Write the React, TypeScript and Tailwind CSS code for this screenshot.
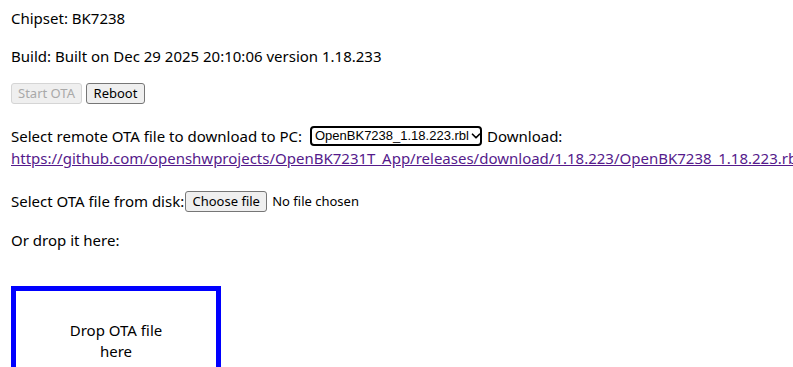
import { ChevronDown } from "lucide-react";

const btn =
  "shrink-0 h-[21px] px-[6px] text-[13px] leading-none rounded-[3px] border border-[#767676] bg-[#efefef] text-black";

export default function App() {
  return (
    <div
      className="w-[793px] h-[367px] overflow-hidden bg-white text-black text-[15px] leading-5 pl-[11px]"
      style={{ fontFamily: '"Noto Sans", "Liberation Sans", Arial, sans-serif' }}
    >
      <div className="mt-[8px] h-5">Chipset: BK7238</div>
      <div className="mt-[18px] h-5">Build: Built on Dec 29 2025 20:10:06 version 1.18.233</div>

      <div className="mt-[17px] flex gap-[4px]">
        <button
          disabled
          className="h-[21px] w-[71px] text-[13px] leading-none rounded-[3px] border border-[#d5d5d5] bg-[#efefef] text-[#a9a9a9]"
        >
          Start OTA
        </button>
        <button className={`${btn} w-[59px]`}>Reboot</button>
      </div>

      <div className="mt-[22px] h-5 flex items-center whitespace-nowrap">
        <span>Select remote OTA file to download to PC:</span>
        <div
          className="shrink-0 ml-[8px] h-[20px] w-[172px] flex items-center justify-between rounded-[4px] border-2 border-black pl-[3px] pr-[1px] text-[13px]"
          style={{ fontFamily: '"Liberation Sans", Arial, sans-serif' }}
        >
          <span>OpenBK7238_1.18.223.rbl</span>
          <ChevronDown className="shrink-0" size={14} strokeWidth={3} />
        </div>
        <span className="ml-[5px]">Download:</span>
      </div>
      <div className="mt-[2px] h-5 whitespace-nowrap">
        <a href="#" className="text-[#551a8b] underline">
          https://github.com/openshwprojects/OpenBK7231T_App/releases/download/1.18.223/OpenBK7238_1.18.223.rbl
        </a>
      </div>

      <div className="mt-[23px] h-5 flex items-center whitespace-nowrap">
        <span>Select OTA file from disk:</span>
        <button className={`${btn} h-[20px] w-[82px] ml-[1px]`}>Choose file</button>
        <span className="ml-[5px] text-[13px]">No file chosen</span>
      </div>

      <div className="mt-[19px] h-5">Or drop it here:</div>

      <div className="mt-[36px] w-[210px] h-[200px] border-[5px] border-[#0000ff] px-[40px] pt-[29px] text-center leading-[21px]">
        Drop OTA file here
      </div>
    </div>
  );
}
